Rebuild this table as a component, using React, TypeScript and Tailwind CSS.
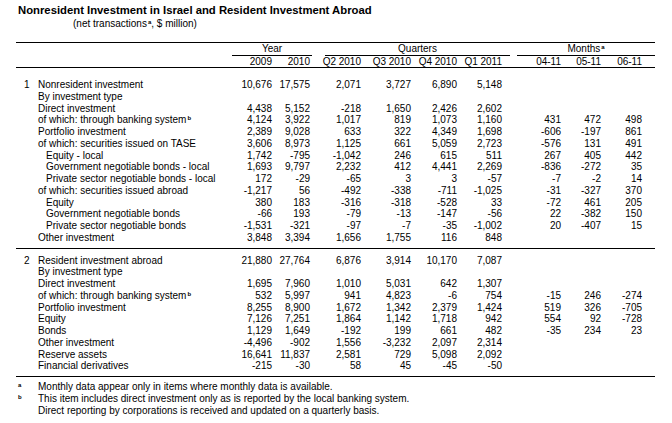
import React from 'react';

type Row = {
  num?: string;
  label: React.ReactNode;
  indent?: boolean;
  values?: string[];
};

// right edges land on the same x as the Excel columns in the source sheet
const colWidths = [
  'w-[31px]',
  'w-[38px]',
  'w-[51px]',
  'w-[50px]',
  'w-[46px]',
  'w-[45px]',
  'w-[59px]',
  'w-[40px]',
  'w-[41px]',
];

const Sup = ({ children }: { children: React.ReactNode }) => (
  <sup className="text-[6px] font-bold ml-[1px]">{children}</sup>
);

const banking = (
  <>
    of which: through banking system<Sup>b</Sup>
  </>
);

const nonresident: Row[] = [
  { num: '1', label: 'Nonresident investment', values: ['10,676', '17,575', '2,071', '3,727', '6,890', '5,148'] },
  { label: 'By investment type' },
  { label: 'Direct investment', values: ['4,438', '5,152', '-218', '1,650', '2,426', '2,602'] },
  { label: banking, values: ['4,124', '3,922', '1,017', '819', '1,073', '1,160', '431', '472', '498'] },
  { label: 'Portfolio investment', values: ['2,389', '9,028', '633', '322', '4,349', '1,698', '-606', '-197', '861'] },
  { label: 'of which: securities issued on TASE', values: ['3,606', '8,973', '1,125', '661', '5,059', '2,723', '-576', '131', '491'] },
  { label: 'Equity - local', indent: true, values: ['1,742', '-795', '-1,042', '246', '615', '511', '267', '405', '442'] },
  { label: 'Government negotiable bonds - local', indent: true, values: ['1,693', '9,797', '2,232', '412', '4,441', '2,269', '-836', '-272', '35'] },
  { label: 'Private sector negotiable bonds - local', indent: true, values: ['172', '-29', '-65', '3', '3', '-57', '-7', '-2', '14'] },
  { label: 'of which: securities issued abroad', values: ['-1,217', '56', '-492', '-338', '-711', '-1,025', '-31', '-327', '370'] },
  { label: 'Equity', indent: true, values: ['380', '183', '-316', '-318', '-528', '33', '-72', '461', '205'] },
  { label: 'Government negotiable bonds', indent: true, values: ['-66', '193', '-79', '-13', '-147', '-56', '22', '-382', '150'] },
  { label: 'Private sector negotiable bonds', indent: true, values: ['-1,531', '-321', '-97', '-7', '-35', '-1,002', '20', '-407', '15'] },
  { label: 'Other investment', values: ['3,848', '3,394', '1,656', '1,755', '116', '848'] },
];

const resident: Row[] = [
  { num: '2', label: 'Resident investment abroad', values: ['21,880', '27,764', '6,876', '3,914', '10,170', '7,087'] },
  { label: 'By investment type' },
  { label: 'Direct investment', values: ['1,695', '7,960', '1,010', '5,031', '642', '1,307'] },
  { label: banking, values: ['532', '5,997', '941', '4,823', '-6', '754', '-15', '246', '-274'] },
  { label: 'Portfolio investment', values: ['8,255', '8,900', '1,672', '1,342', '2,379', '1,424', '519', '326', '-705'] },
  { label: 'Equity', values: ['7,126', '7,251', '1,864', '1,142', '1,718', '942', '554', '92', '-728'] },
  { label: 'Bonds', values: ['1,129', '1,649', '-192', '199', '661', '482', '-35', '234', '23'] },
  { label: 'Other investment', values: ['-4,496', '-902', '1,556', '-3,232', '2,097', '2,314'] },
  { label: 'Reserve assets', values: ['16,641', '11,837', '2,581', '729', '5,098', '2,092'] },
  { label: 'Financial derivatives', values: ['-215', '-30', '58', '45', '-45', '-50'] },
];

const headers = ['2009', '2010', 'Q2 2010', 'Q3 2010', 'Q4 2010', 'Q1 2011', '04-11', '05-11', '06-11'];

const DataRow = ({ row }: { row: Row }) => (
  <div className="flex h-[11.75px] items-center leading-[11.75px]">
    <div className="flex w-[225px] whitespace-nowrap">
      <span className="w-[22px] pl-[8px]">{row.num}</span>
      <span className={row.indent ? 'pl-[8px]' : ''}>{row.label}</span>
    </div>
    {colWidths.map((w, i) => (
      <div key={i} className={`${w} text-right whitespace-nowrap`}>
        {row.values?.[i] ?? ''}
      </div>
    ))}
  </div>
);

export default function App() {
  return (
    <div className="w-[672px] h-[423px] bg-white text-black text-[10px] font-['Liberation_Sans',Arial,sans-serif] overflow-hidden">
      {/* Title */}
      <div className="pl-[18px] pt-[4px] text-[11.3px] font-bold leading-[13px] whitespace-nowrap">
        Nonresident Investment in Israel and Resident Investment Abroad
      </div>
      <div className="pl-[73px] mt-[1px] leading-[12px]">
        (net transactions<Sup>a</Sup>, $ million)
      </div>

      {/* Table */}
      <div className="ml-[16px] w-[639px] mt-[12px] border-t border-black">
        {/* Group headers */}
        <div className="flex h-[13px] items-end leading-[12px]">
          <div className="w-[216px]" />
          <div className="w-[80px] border-b border-black text-center">Year</div>
          <div className="w-[13px]" />
          <div className="w-[185px] border-b border-black text-center">Quarters</div>
          <div className="w-[7px]" />
          <div className="w-[138px] border-b border-black text-center">
            Months<Sup>a</Sup>
          </div>
        </div>
        <div className="flex h-[12px] items-center leading-[12px] border-b border-black">
          <div className="w-[225px]" />
          {colWidths.map((w, i) => (
            <div key={i} className={`${w} text-right whitespace-nowrap`}>
              {headers[i]}
            </div>
          ))}
        </div>

        {/* Section 1 */}
        <div className="pt-[11px] pb-[4px] border-b border-black">
          {nonresident.map((r, i) => (
            <DataRow key={i} row={r} />
          ))}
        </div>

        {/* Section 2 */}
        <div className="pt-[6px] pb-[4px] border-b border-black">
          {resident.map((r, i) => (
            <DataRow key={i} row={r} />
          ))}
        </div>
      </div>

      {/* Footnotes */}
      <div className="ml-[18px] mt-[4px] leading-[12px]">
        <div className="flex">
          <span className="w-[20px] text-[6px] font-bold leading-[8px]">a</span>
          <span>Monthly data appear only in items where monthly data is available.</span>
        </div>
        <div className="flex">
          <span className="w-[20px] text-[6px] font-bold leading-[8px]">b</span>
          <span>This item includes direct investment only as is reported by the local banking system.</span>
        </div>
        <div className="flex">
          <span className="w-[20px]" />
          <span>Direct reporting by corporations is received and updated on a quarterly basis.</span>
        </div>
      </div>
    </div>
  );
}
